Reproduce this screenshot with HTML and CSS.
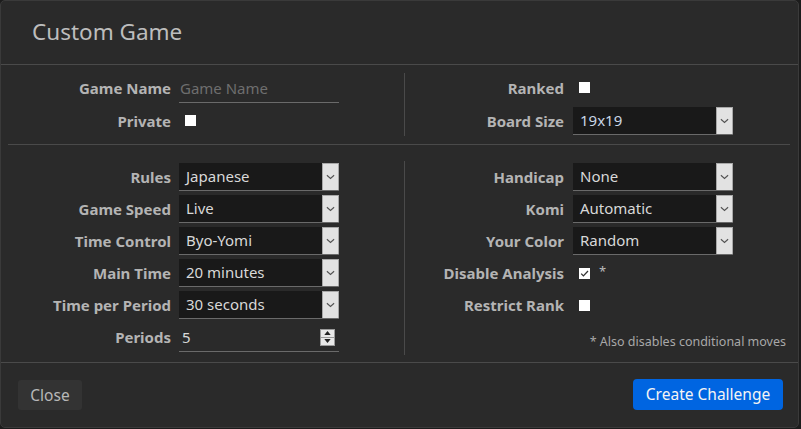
FILE: index.html
```html
<!DOCTYPE html>
<html lang="en">
<head>
<meta charset="utf-8">
<title>Custom Game</title>
<link rel="stylesheet" href="styles.css">
</head>
<body>
<div class="modal">
  <header class="modal-header">
    <h1 class="modal-title">Custom Game</h1>
  </header>

  <section class="section section-top">
    <div class="col col-left">
      <label class="lbl">Game Name</label>
      <div class="field"><input class="text-input" type="text" placeholder="Game Name"></div>
      <label class="lbl">Private</label>
      <div class="field"><input class="check" type="checkbox"></div>
    </div>
    <div class="col col-right">
      <label class="lbl">Ranked</label>
      <div class="field"><input class="check" type="checkbox"></div>
      <label class="lbl">Board Size</label>
      <div class="field">
        <div class="select"><span class="select-value value-accent">19x19</span><span class="select-arrow"><svg viewBox="0 0 10 6" width="9" height="6"><path d="M1 1l4 3.5L9 1" fill="none" stroke="#555" stroke-width="1.3"/></svg></span></div>
      </div>
    </div>
  </section>

  <hr class="rule">

  <section class="section section-main">
    <div class="col col-left rows6">
      <label class="lbl">Rules</label>
      <div class="field"><div class="select"><span class="select-value">Japanese</span><span class="select-arrow"><svg viewBox="0 0 10 6" width="9" height="6"><path d="M1 1l4 3.5L9 1" fill="none" stroke="#555" stroke-width="1.3"/></svg></span></div></div>
      <label class="lbl">Game Speed</label>
      <div class="field"><div class="select"><span class="select-value">Live</span><span class="select-arrow"><svg viewBox="0 0 10 6" width="9" height="6"><path d="M1 1l4 3.5L9 1" fill="none" stroke="#555" stroke-width="1.3"/></svg></span></div></div>
      <label class="lbl">Time Control</label>
      <div class="field"><div class="select"><span class="select-value">Byo-Yomi</span><span class="select-arrow"><svg viewBox="0 0 10 6" width="9" height="6"><path d="M1 1l4 3.5L9 1" fill="none" stroke="#555" stroke-width="1.3"/></svg></span></div></div>
      <label class="lbl">Main Time</label>
      <div class="field"><div class="select"><span class="select-value">20 minutes</span><span class="select-arrow"><svg viewBox="0 0 10 6" width="9" height="6"><path d="M1 1l4 3.5L9 1" fill="none" stroke="#555" stroke-width="1.3"/></svg></span></div></div>
      <label class="lbl">Time per Period</label>
      <div class="field"><div class="select"><span class="select-value">30 seconds</span><span class="select-arrow"><svg viewBox="0 0 10 6" width="9" height="6"><path d="M1 1l4 3.5L9 1" fill="none" stroke="#555" stroke-width="1.3"/></svg></span></div></div>
      <label class="lbl">Periods</label>
      <div class="field">
        <div class="number">
          <span class="number-value">5</span>
          <span class="spinner">
            <span class="spin"><svg viewBox="0 0 8 5" width="7" height="4"><path d="M0 5L4 0L8 5Z" fill="#222"/></svg></span>
            <span class="spin"><svg viewBox="0 0 8 5" width="7" height="4"><path d="M0 0L4 5L8 0Z" fill="#222"/></svg></span>
          </span>
        </div>
      </div>
    </div>
    <div class="col col-right rows6">
      <label class="lbl">Handicap</label>
      <div class="field"><div class="select"><span class="select-value">None</span><span class="select-arrow"><svg viewBox="0 0 10 6" width="9" height="6"><path d="M1 1l4 3.5L9 1" fill="none" stroke="#555" stroke-width="1.3"/></svg></span></div></div>
      <label class="lbl">Komi</label>
      <div class="field"><div class="select"><span class="select-value">Automatic</span><span class="select-arrow"><svg viewBox="0 0 10 6" width="9" height="6"><path d="M1 1l4 3.5L9 1" fill="none" stroke="#555" stroke-width="1.3"/></svg></span></div></div>
      <label class="lbl">Your Color</label>
      <div class="field"><div class="select"><span class="select-value">Random</span><span class="select-arrow"><svg viewBox="0 0 10 6" width="9" height="6"><path d="M1 1l4 3.5L9 1" fill="none" stroke="#555" stroke-width="1.3"/></svg></span></div></div>
      <label class="lbl">Disable Analysis</label>
      <div class="field"><span class="check checked"><svg viewBox="0 0 11 11" width="11" height="11"><path d="M2.2 5.6l2.2 2.3L9 3" fill="none" stroke="#333" stroke-width="1.3"/></svg></span><span class="star">*</span></div>
      <label class="lbl">Restrict Rank</label>
      <div class="field"><input class="check" type="checkbox"></div>
      <p class="footnote">* Also disables conditional moves</p>
    </div>
  </section>

  <footer class="modal-footer">
    <button class="btn btn-close">Close</button>
    <button class="btn btn-primary">Create Challenge</button>
  </footer>
</div>
</body>
</html>
```

FILE: styles.css
```css
html, body {
  margin: 0;
  padding: 0;
  background: #1c1c1c;
}

body {
  font-family: "Noto Sans", "Open Sans", sans-serif;
  color: #c8c8c8;
  font-size: 15px;
}

.modal {
  width: 797px;
  height: 426px;
  background: #2a2a2a;
  border: 1px solid #3a3a3a;
  border-radius: 5px;
  display: flex;
  flex-direction: column;
  overflow: hidden;
}

.modal-header {
  height: 63px;
  border-bottom: 1px solid #4a4a4a;
  display: flex;
  align-items: center;
  padding-left: 31px;
}

.modal-title {
  margin: 0 0 2px 0;
  font-size: 22.5px;
  font-weight: 400;
  color: #bdbdbd;
}

.section {
  display: flex;
  margin: 0 7px;
}

.section-top {
  padding: 8px 0 8px;
}

.section-main {
  padding: 16px 0 7px;
  flex: 1;
}

.rule {
  margin: 0 8px 0 7px;
  border: 0;
  border-top: 1px solid #4a4a4a;
  height: 0;
}

.col {
  display: grid;
  grid-auto-rows: 30px;
  row-gap: 3px;
  align-items: center;
  column-gap: 8px;
}

.section-top .col {
  align-content: start;
}

.col-left {
  width: 396px;
  grid-template-columns: 163px 160px;
  border-right: 1px solid #4a4a4a;
}

.col-right {
  flex: 1;
  grid-template-columns: 159px minmax(160px, 1fr);
  column-gap: 9px;
}

.rows6 {
  grid-auto-rows: 32px;
  row-gap: 0;
}

.lbl {
  text-align: right;
  font-weight: 700;
  color: #b4b4b4;
  font-size: 15px;
  white-space: nowrap;
}

.field {
  display: flex;
  align-items: center;
  height: 100%;
}

.text-input {
  width: 160px;
  box-sizing: border-box;
  height: 28px;
  margin-top: 1px;
  background: transparent;
  border: 0;
  border-bottom: 1px solid #6a6a6a;
  color: #ddd;
  font: inherit;
  font-size: 15px;
  padding: 0 0 1px 1px;
  outline: none;
}

.text-input::placeholder {
  color: #6e6e6e;
}

.check {
  appearance: none;
  -webkit-appearance: none;
  margin: 0 0 0 6px;
  width: 11px;
  height: 11px;
  background: #fff;
  border: 0;
  border-radius: 0;
  display: inline-flex;
}

.section-top .check {
  margin-top: -1px;
}

.select {
  width: 160px;
  height: 28px;
  box-sizing: border-box;
  background: #191919;
  border-bottom: 1px solid #6a6a6a;
  display: flex;
  align-items: stretch;
  margin-top: -1px;
}

.select-value {
  flex: 1;
  display: flex;
  align-items: center;
  padding-left: 7px;
  color: #d8d8d8;
  font-size: 15px;
}

.value-accent {
  color: #c9d6e6;
}

.select-arrow {
  width: 17px;
  box-sizing: border-box;
  background: #e2e2e2;
  border: 1px solid #a8a8a8;
  border-bottom: 0;
  display: flex;
  align-items: center;
  justify-content: center;
}

.number {
  width: 160px;
  height: 28px;
  box-sizing: border-box;
  border-bottom: 1px solid #6a6a6a;
  display: flex;
  align-items: center;
  margin-top: 1px;
}

.number-value {
  flex: 1;
  padding-left: 3px;
  color: #d8d8d8;
  font-size: 15px;
}

.spinner {
  width: 15px;
  height: 17px;
  margin-right: 4px;
  background: #e8e8e8;
  border: 1px solid #9a9a9a;
  box-sizing: border-box;
  display: flex;
  flex-direction: column;
}

.spin {
  flex: 1;
  display: flex;
  align-items: center;
  justify-content: center;
}

.spin + .spin {
  border-top: 1px solid #9a9a9a;
}

.checked {
  align-items: center;
  justify-content: center;
}

.star {
  margin-left: 9px;
  color: #bbb;
  font-size: 13px;
  margin-top: -4px;
}

.footnote {
  grid-column: 1 / -1;
  margin: 0;
  text-align: right;
  font-size: 12.5px;
  color: #a8a8a8;
  align-self: end;
  padding: 0 5px 3px 0;
}

.modal-footer {
  border-top: 1px solid #4a4a4a;
  flex: 0 0 62px;
  display: flex;
  align-items: center;
  justify-content: space-between;
  padding: 0 15px 2px 17px;
}

.btn {
  font-family: "Noto Sans", "Open Sans", sans-serif;
  font-size: 15.5px;
  border: 0;
  border-radius: 3px;
  height: 30px;
  cursor: pointer;
  padding: 0;
}

.btn-close {
  background: #333333;
  color: #b8b8b8;
  width: 64px;
  margin-top: 2px;
}

.btn-primary {
  background: #0065e1;
  color: #f4f4f4;
  width: 150px;
  height: 31px;
  border-radius: 4px;
}
```
